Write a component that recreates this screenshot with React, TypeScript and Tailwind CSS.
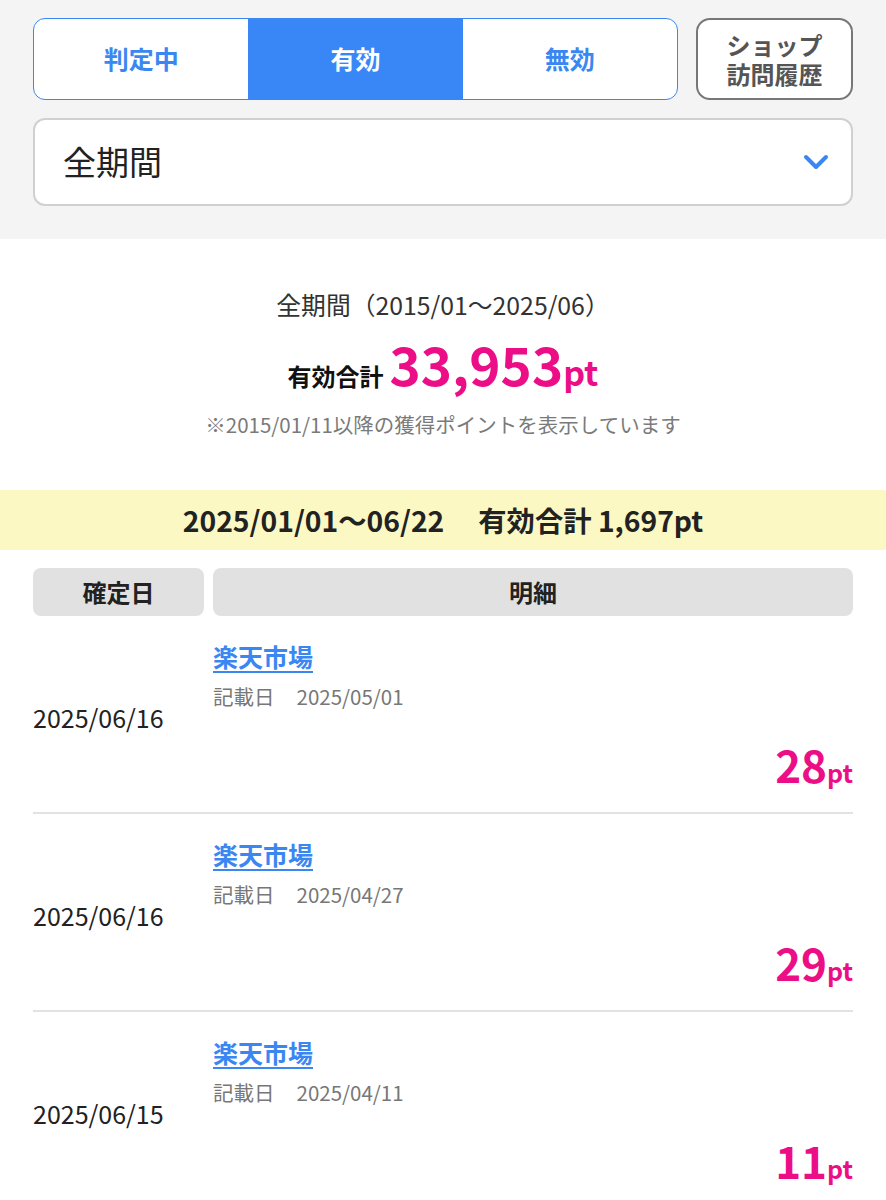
import React from 'react'

const rows = [
  { fixed: '2025/06/16', shop: '楽天市場', listed: '2025/05/01', pt: 28 },
  { fixed: '2025/06/16', shop: '楽天市場', listed: '2025/04/27', pt: 29 },
  { fixed: '2025/06/15', shop: '楽天市場', listed: '2025/04/11', pt: 11 },
]

const font = { fontFamily: '"Noto Sans CJK JP", "Noto Sans", sans-serif' }

export default function App() {
  return (
    <div className="min-h-[1200px] bg-white text-[#222]" style={font}>
      {/* Filter area */}
      <div className="bg-[#f4f4f4] px-[33px] pt-[18px] pb-[33px]">
        <div className="flex gap-[18px]">
          <div className="flex flex-1 h-[82px] rounded-[12px] border border-[#3a87f2] bg-white overflow-hidden">
            <button className="flex-1 text-[25px] font-bold text-[#3a87f2]">判定中</button>
            <button className="flex-1 text-[25px] font-bold text-white bg-[#3987f7]">有効</button>
            <button className="flex-1 text-[25px] font-bold text-[#3a87f2]">無効</button>
          </div>
          <button className="w-[157px] h-[82px] rounded-[14px] border-2 border-[#777] bg-white text-[24px] font-bold text-[#555] flex flex-col items-center justify-center gap-[1px]">
            <span className="leading-[28px]">ショップ</span>
            <span className="leading-[28px]">訪問履歴</span>
          </button>
        </div>
        <div className="mt-[18px] h-[88px] rounded-[12px] border-2 border-[#d0d0d0] bg-white flex items-center justify-between pl-[28px] pr-[22px]">
          <span className="text-[33px] text-[#222]">全期間</span>
          <svg width="26" height="16" viewBox="0 0 26 16" fill="none">
            <path d="M3 3l10 10L23 3" stroke="#3a87f2" strokeWidth="4" strokeLinecap="round" strokeLinejoin="round" />
          </svg>
        </div>
      </div>

      {/* Summary */}
      <div className="flex flex-col items-center pt-[48px] pb-[50px]">
        <p className="text-[24.8px] leading-[34px] text-[#333]">全期間（2015/01〜2025/06）</p>
        <p className="mt-[10px] flex items-baseline gap-[6px]">
          <span className="text-[24px] font-bold text-[#111]">有効合計</span>
          <span className="text-[53px] leading-[64px] font-bold text-[#ec0e87]">33,953</span>
          <span className="text-[34px] font-bold text-[#ec0e87] -ml-[6px]">pt</span>
        </p>
        <p className="mt-[12px] text-[20.5px] text-[#7a7a7a]">※2015/01/11以降の獲得ポイントを表示しています</p>
      </div>

      {/* Period band */}
      <div className="h-[60px] bg-[#fcf8c4] flex items-center justify-center text-[28.3px] font-bold text-[#222]">
        <span>2025/01/01〜06/22</span>
        <span className="ml-[34px]">有効合計 1,697pt</span>
      </div>

      {/* Table */}
      <div className="px-[33px] pt-[18px]">
        <div className="flex gap-[9px] text-[24px] font-bold text-[#222]">
          <div className="w-[171px] h-[48px] rounded-[8px] bg-[#e1e1e1] flex items-center justify-center">確定日</div>
          <div className="flex-1 h-[48px] rounded-[8px] bg-[#e1e1e1] flex items-center justify-center">明細</div>
        </div>
        {rows.map((r, i) => (
          <div key={i} className="flex gap-[9px] h-[198px] border-b-2 border-[#e2e2e2]">
            <div className="w-[171px] flex items-center text-[25px] text-[#222] pt-[8px]">{r.fixed}</div>
            <div className="flex-1 flex flex-col pt-[24px]">
              <a className="text-[25px] leading-[32px] font-bold text-[#3a87f2] underline underline-offset-[4px] self-start">{r.shop}</a>
              <p className="mt-[9px] text-[20.5px] text-[#777]">
                記載日<span className="ml-[22px]">{r.listed}</span>
              </p>
              <p className="mt-auto mb-[20px] self-end flex items-baseline font-bold text-[#ec0e87]">
                <span className="text-[44px] leading-[46px]">{r.pt}</span>
                <span className="text-[25px]">pt</span>
              </p>
            </div>
          </div>
        ))}
      </div>
    </div>
  )
}
